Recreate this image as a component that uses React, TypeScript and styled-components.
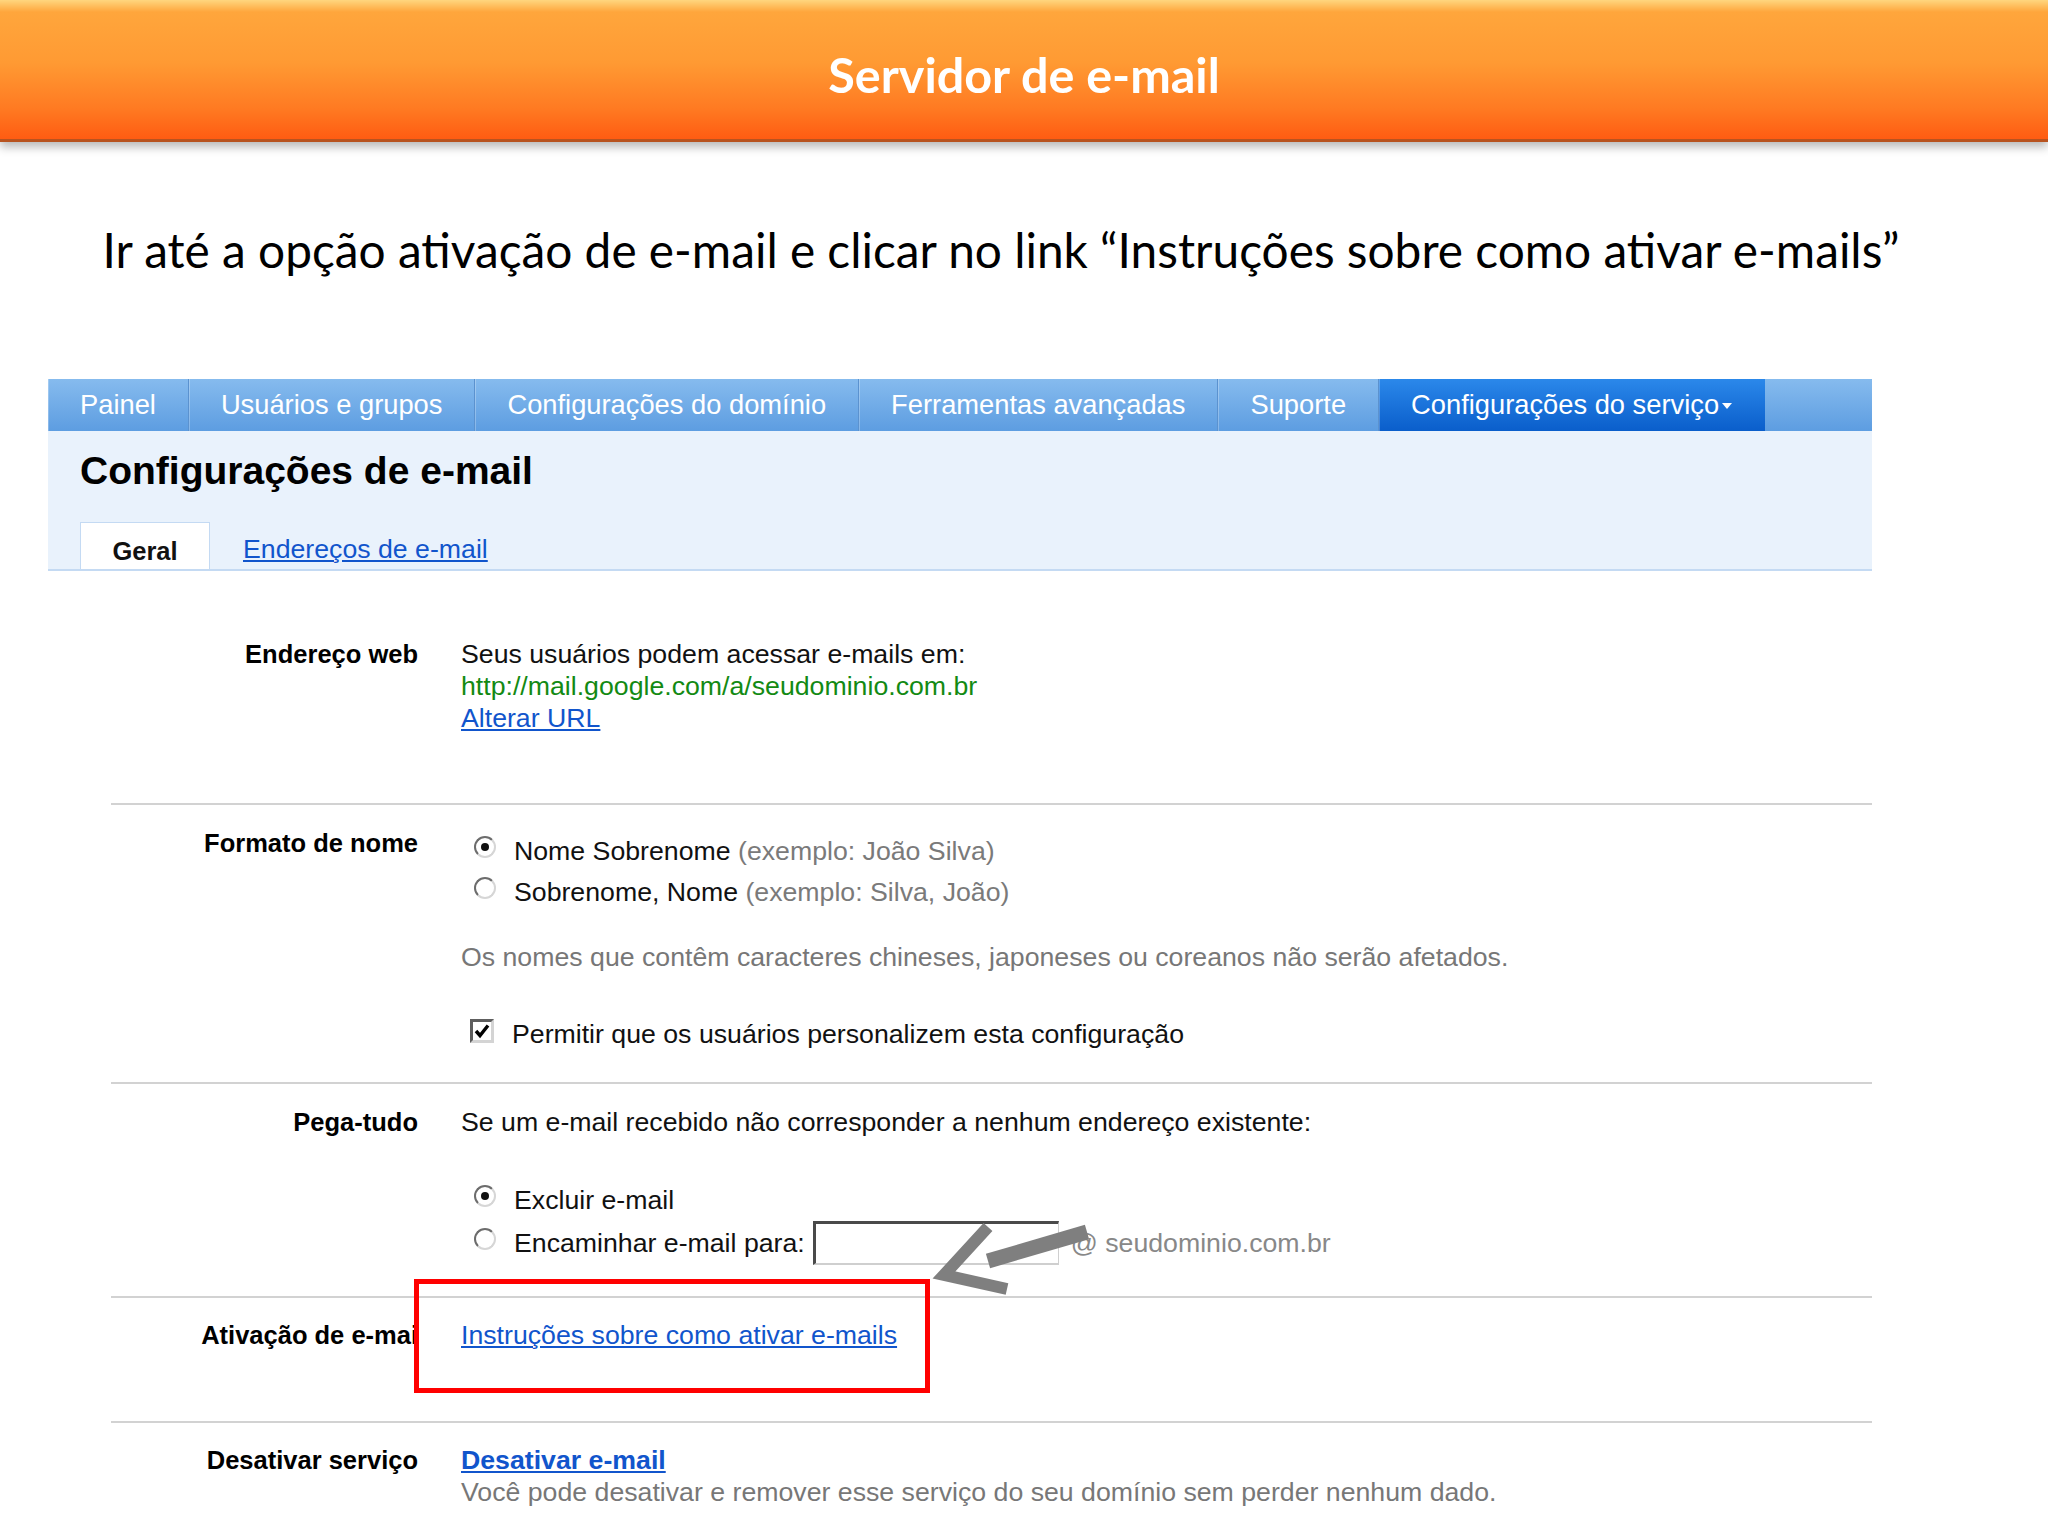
import { createGlobalStyle, styled } from "styled-components";

const GlobalStyle = createGlobalStyle`
  html, body {
    margin: 0;
    padding: 0;
    background: #fff;
  }

  body {
    font-family: "Liberation Sans", Arial, sans-serif;
  }
`;

const navItems = [
    "Painel",
    "Usuários e grupos",
    "Configurações do domínio",
    "Ferramentas avançadas",
    "Suporte",
];


const App: React.FC = () => {
    return (
        <>
            <GlobalStyle />
            <Page>
                <Banner>
                    <BannerTitle>Servidor de e-mail</BannerTitle>
                </Banner>

                <Instruction>
                    Ir até a opção ativação de e-mail e clicar no link “Instruções sobre como ativar e-mails”
                </Instruction>

                <Console>
                    <Nav>
                        {navItems.map((item) => (
                            <NavTab key={item}>{item}</NavTab>
                        ))}
                        <NavTab $active>
                            Configurações do serviço
                            <Caret />
                        </NavTab>
                        <NavFiller />
                    </Nav>

                    <Panel>
                        <PanelTitle>Configurações de e-mail</PanelTitle>
                        <SubTabs>
                            <SubTab>Geral</SubTab>
                            <SubLink href="#">Endereços de e-mail</SubLink>
                        </SubTabs>
                    </Panel>

                    <Row $pt={67} $pb={69}>
                        <Label>Endereço web</Label>
                        <Content>
                            <Line>Seus usuários podem acessar e-mails em:</Line>
                            <Line $color="#138a13">http://mail.google.com/a/seudominio.com.br</Line>
                            <Line><Link href="#">Alterar URL</Link></Line>
                        </Content>
                    </Row>

                    <Row $divider $pt={22} $pb={30}>
                        <Label>Formato de nome</Label>
                        <Content>
                            <Option $top={4}>
                                <Radio $checked />
                                Nome Sobrenome <Hint>(exemplo: João Silva)</Hint>
                            </Option>
                            <Option>
                                <Radio />
                                Sobrenome, Nome <Hint>(exemplo: Silva, João)</Hint>
                            </Option>
                            <Line $color="#777" $top={28}>
                                Os nomes que contêm caracteres chineses, japoneses ou coreanos não serão afetados.
                            </Line>
                            <Option $top={43} $height={36}>
                                <Checkbox>
                                    <svg width="18" height="18" viewBox="0 0 18 18">
                                        <path d="M3 9 L7 13.5 L15 3.5" fill="none" stroke="#000" strokeWidth="3.4" />
                                    </svg>
                                </Checkbox>
                                Permitir que os usuários personalizem esta configuração
                            </Option>
                        </Content>
                    </Row>

                    <Row $divider $pt={22} $pb={31}>
                        <Label>Pega-tudo</Label>
                        <Content>
                            <Line>Se um e-mail recebido não corresponder a nenhum endereço existente:</Line>
                            <Option $top={42}>
                                <Radio $checked />
                                Excluir e-mail
                            </Option>
                            <Option $height={44}>
                                <Radio />
                                Encaminhar e-mail para:
                                <TextInput />
                                <Domain>@ seudominio.com.br</Domain>
                            </Option>
                        </Content>
                    </Row>

                    <Row $divider $pt={21} $pb={70}>
                        <Label>Ativação de e-mai</Label>
                        <Content>
                            <Line><Link href="#">Instruções sobre como ativar e-mails</Link></Line>
                        </Content>
                    </Row>

                    <Row $divider $pt={21} $pb={20}>
                        <Label>Desativar serviço</Label>
                        <Content>
                            <Line><Link href="#" $bold>Desativar e-mail</Link></Line>
                            <Line $color="#777">
                                Você pode desativar e remover esse serviço do seu domínio sem perder nenhum dado.
                            </Line>
                        </Content>
                    </Row>
                </Console>

                <Highlight />

                <Pointer width="2048" height="1536" viewBox="0 0 2048 1536">
                    <line x1="988" y1="1261" x2="1087" y2="1232" stroke="#7f7f7f" strokeWidth="15" />
                    <polyline
                        points="988,1227 944,1275 1007,1289"
                        fill="none"
                        stroke="#7f7f7f"
                        strokeWidth="12"
                        strokeLinejoin="miter"
                    />
                </Pointer>
            </Page>
        </>
    );
}



const Page = styled.div`
    position: relative;
    width: 2048px;
    height: 1536px;
    overflow: hidden;
    background: #fff;
`;


const Banner = styled.header`
    height: 142px;
    display: flex;
    align-items: center;
    justify-content: center;
    padding-top: 9px;
    box-sizing: border-box;
    background: linear-gradient(
        to bottom,
        #ffd67e 0px,
        #ffa63c 12px,
        #ff9a33 45%,
        #ff7a22 78%,
        #ff5c12 100%
    );
    border-bottom: 3px solid #b8531f;
    box-shadow: 0 5px 9px rgba(0, 0, 0, 0.28);
`;


const BannerTitle = styled.h1`
    margin: 0;
    font-family: Lato, "Open Sans", sans-serif;
    font-weight: 700;
    font-size: 48.5px;
    color: #fff;
`;


const Instruction = styled.p`
    margin: 80px 0 0;
    padding-right: 46px;
    text-align: center;
    font-family: Lato, "Open Sans", sans-serif;
    font-size: 47.8px;
    line-height: 56px;
    color: #000;
`;


const Console = styled.div`
    margin: 101px 0 0 48px;
    width: 1824px;
`;


const Nav = styled.nav`
    display: flex;
    height: 52px;
    background: linear-gradient(to bottom, #86bbee, #5d9de1);
`;


const NavTab = styled.div<{ $active?: boolean }>`
    display: flex;
    align-items: center;
    padding: 0 32px;
    font-size: 27.3px;
    color: #fff;
    white-space: nowrap;
    border-right: 1px solid ${(p) => (p.$active ? "transparent" : "#5b92cf")};
    box-shadow: inset 1px 0 0 rgba(255, 255, 255, 0.25);
    background: ${(p) => (p.$active ? "linear-gradient(to bottom, #2b88ea, #0a5ecb)" : "transparent")};
`;


const Caret = styled.span`
    margin-left: 3px;
    margin-top: 2px;
    border-left: 5px solid transparent;
    border-right: 5px solid transparent;
    border-top: 6px solid #fff;
`;


const NavFiller = styled.div`
    flex: 1;
`;


const Panel = styled.div`
    display: flex;
    flex-direction: column;
    padding-top: 17px;
    background: #e9f2fc;
    border-bottom: 2px solid #c4daf3;
`;


const PanelTitle = styled.h2`
    margin: 0 0 0 32px;
    font-size: 39px;
    line-height: 46px;
    font-weight: 700;
    color: #000;
`;


const SubTabs = styled.div`
    display: flex;
    align-items: center;
    margin: 28px 0 0 32px;
    height: 47px;
`;


const SubTab = styled.div`
    width: 130px;
    height: 47px;
    box-sizing: border-box;
    display: flex;
    align-items: center;
    justify-content: center;
    padding-top: 10px;
    background: #fff;
    border: 1px solid #c4daf3;
    border-bottom: none;
    font-size: 25.5px;
    font-weight: 700;
    color: #111;
`;


const SubLink = styled.a`
    margin-left: 33px;
    padding-top: 8px;
    font-size: 26.7px;
    color: #1155cc;
    text-decoration: underline;
`;


const Row = styled.div<{ $divider?: boolean; $pt: number; $pb: number }>`
    display: grid;
    grid-template-columns: 307px 1fr;
    column-gap: 43px;
    margin-left: 63px;
    padding: ${(p) => p.$pt}px 0 ${(p) => p.$pb}px;
    border-top: ${(p) => (p.$divider ? "2px solid #d2d2d2" : "none")};
`;


const Label = styled.div`
    text-align: right;
    font-size: 25.5px;
    line-height: 32px;
    font-weight: 700;
    color: #000;
    white-space: nowrap;
`;


const Content = styled.div`
    display: flex;
    flex-direction: column;
    font-size: 26.7px;
    color: #111;
`;


const Line = styled.div<{ $color?: string; $top?: number }>`
    line-height: 32px;
    margin-top: ${(p) => p.$top ?? 0}px;
    color: ${(p) => p.$color ?? "#111"};
    white-space: nowrap;
`;


const Link = styled.a<{ $bold?: boolean }>`
    color: #1155cc;
    font-weight: ${(p) => (p.$bold ? 700 : 400)};
    text-decoration: underline;
`;


const Option = styled.div<{ $top?: number; $height?: number }>`
    display: flex;
    align-items: center;
    height: ${(p) => p.$height ?? 41}px;
    margin-top: ${(p) => p.$top ?? 0}px;
    white-space: pre;
`;


const Hint = styled.span`
    color: #7a7a7a;
`;


const Radio = styled.span<{ $checked?: boolean }>`
    position: relative;
    flex-shrink: 0;
    width: 22px;
    height: 22px;
    box-sizing: border-box;
    margin: 0 18px 9px 13px;
    border-radius: 50%;
    border: 2px solid;
    border-color: #6c6c6c #d6d6d6 #d6d6d6 #6c6c6c;
    background: #fff;

    &::after {
        content: "";
        display: ${(p) => (p.$checked ? "block" : "none")};
        position: absolute;
        left: 50%;
        top: 50%;
        width: 8px;
        height: 8px;
        border-radius: 50%;
        background: #111;
        transform: translate(-50%, -50%);
    }
`;


const Checkbox = styled.span`
    flex-shrink: 0;
    display: flex;
    align-items: center;
    justify-content: center;
    width: 24px;
    height: 24px;
    box-sizing: border-box;
    margin: 0 18px 6px 9px;
    border: 3px solid;
    border-color: #5e5e5e #d4d4d4 #d4d4d4 #5e5e5e;
    background: #fff;
`;


const TextInput = styled.span`
    width: 246px;
    height: 44px;
    box-sizing: border-box;
    margin-left: 8px;
    border-style: solid;
    border-width: 3px 1px 2px 3px;
    border-color: #4a4a4a #cfcfcf #cfcfcf #4a4a4a;
    background: #fff;
`;


const Domain = styled.span`
    margin-left: 12px;
    color: #888;
`;


const Highlight = styled.div`
    position: absolute;
    left: 414px;
    top: 1279px;
    width: 516px;
    height: 114px;
    box-sizing: border-box;
    border: 5px solid #f00;
    pointer-events: none;
`;


const Pointer = styled.svg`
    position: absolute;
    left: 0;
    top: 0;
    pointer-events: none;
`;


export default App;
